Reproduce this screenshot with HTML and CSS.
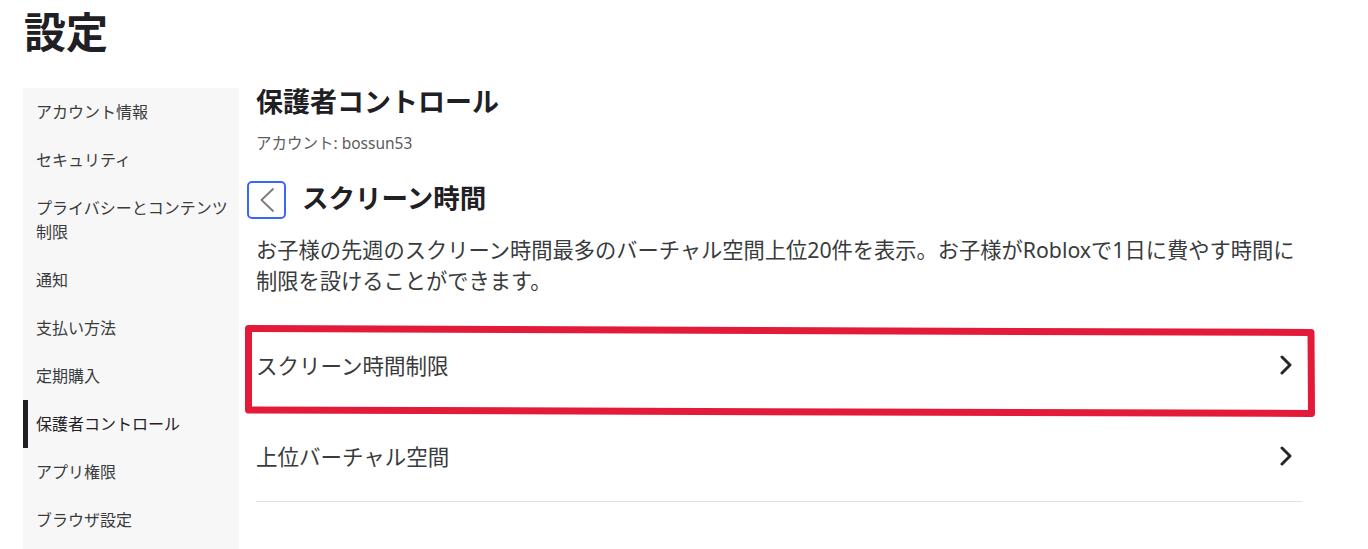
FILE: index.html
```html
<!DOCTYPE html>
<html lang="ja">
<head>
<meta charset="utf-8">
<title>設定</title>
<link rel="stylesheet" href="styles.css">
</head>
<body>
<div class="page">
  <h1 class="page-title">設定</h1>
  <div class="layout">
    <nav class="sidebar">
      <div class="nav-item">アカウント情報</div>
      <div class="nav-item">セキュリティ</div>
      <div class="nav-item">プライバシーとコンテンツ<br>制限</div>
      <div class="nav-item">通知</div>
      <div class="nav-item">支払い方法</div>
      <div class="nav-item">定期購入</div>
      <div class="nav-item active">保護者コントロール</div>
      <div class="nav-item">アプリ権限</div>
      <div class="nav-item">ブラウザ設定</div>
    </nav>
    <main class="main">
      <h2 class="section-title">保護者コントロール</h2>
      <div class="account">アカウント: bossun53</div>
      <div class="back-row">
        <button class="back-btn" aria-label="戻る">
          <svg width="14" height="24" viewBox="0 0 14 24"><path d="M13 1 L1.5 12 L13 23" fill="none" stroke="#7b7b7e" stroke-width="1.8" stroke-linecap="round" stroke-linejoin="round"/></svg>
        </button>
        <h3 class="sub-title">スクリーン時間</h3>
      </div>
      <p class="desc">お子様の先週のスクリーン時間最多のバーチャル空間上位20件を表示。お子様がRobloxで1日に費やす時間に制限を設けることができます。</p>
      <div class="list">
        <div class="list-row">
          <span>スクリーン時間制限</span>
          <svg class="chev" width="14" height="20" viewBox="0 0 14 20"><path d="M3 2 L11 10 L3 18" fill="none" stroke="#24262a" stroke-width="3" stroke-linecap="round" stroke-linejoin="round"/></svg>
        </div>
        <div class="list-row">
          <span>上位バーチャル空間</span>
          <svg class="chev" width="14" height="20" viewBox="0 0 14 20"><path d="M3 2 L11 10 L3 18" fill="none" stroke="#24262a" stroke-width="3" stroke-linecap="round" stroke-linejoin="round"/></svg>
        </div>
      </div>
    </main>
  </div>
  <svg class="annot" width="1368" height="549" viewBox="0 0 1368 549">
    <polygon points="248.5,328.5 1311,332.5 1311.5,413.5 248.5,410" fill="none" stroke="#e31a38" stroke-width="7" stroke-linejoin="round"/>
  </svg>
</div>
</body>
</html>
```

FILE: styles.css
```css
* { box-sizing: border-box; }
html, body { margin: 0; padding: 0; background: #fff; }
body {
  font-family: "Noto Sans", "Noto Sans CJK JP", sans-serif;
  color: #393b3d;
  overflow: hidden;
}
.page {
  position: relative;
  width: 1368px;
  height: 549px;
  overflow: hidden;
  padding-left: 23px;
}
.page-title {
  margin: 0;
  padding-top: 7px;
  font-size: 42px;
  line-height: 50px;
  font-weight: 700;
  color: #1f2023;
  padding-left: 1px;
}
.layout {
  display: flex;
  margin-top: 31px;
  align-items: flex-start;
}
.sidebar {
  width: 216px;
  flex: none;
  background: #f7f7f7;
  padding-bottom: 20px;
}
.nav-item {
  padding: 12px 0 12px 8px;
  font-size: 16px;
  line-height: 24px;
  color: #393b3d;
  border-left: 5px solid transparent;
  white-space: nowrap;
}
.nav-item.active {
  border-left-color: #1f2023;
  color: #1f2023;
}
.main {
  margin-left: 17px;
  width: 1046px;
}
.section-title {
  margin: 0;
  font-size: 27px;
  line-height: 28px;
  font-weight: 700;
  color: #1f2023;
}
.account {
  margin-top: 17px;
  font-size: 15.5px;
  line-height: 20px;
  color: #5a5c60;
}
.back-row {
  display: flex;
  align-items: center;
  margin-top: 28px;
  margin-left: -9px;
  height: 38px;
}
.back-btn {
  width: 39px;
  height: 38px;
  border: 2px solid #3a66ff;
  border-radius: 5px;
  background: #fff;
  padding: 0;
  display: flex;
  align-items: center;
  justify-content: center;
}
.sub-title {
  margin: 0 0 0 16px;
  font-size: 26.5px;
  line-height: 34px;
  font-weight: 700;
  color: #1f2023;
  position: relative;
  top: -2px;
}
.desc {
  margin: 15px -8px 0 0;
  font-size: 21.25px;
  line-height: 31px;
  color: #393b3d;
}
.list {
  margin-top: 24px;
}
.list-row {
  height: 91px;
  display: flex;
  align-items: center;
  justify-content: space-between;
  border-bottom: 1px solid #e1e1e1;
  font-size: 21.5px;
  color: #393b3d;
  padding-right: 9px;
}
.list-row span { position: relative; top: -1px; }
.chev { flex: none; }
.annot {
  position: absolute;
  left: 0;
  top: 0;
  pointer-events: none;
}
```
